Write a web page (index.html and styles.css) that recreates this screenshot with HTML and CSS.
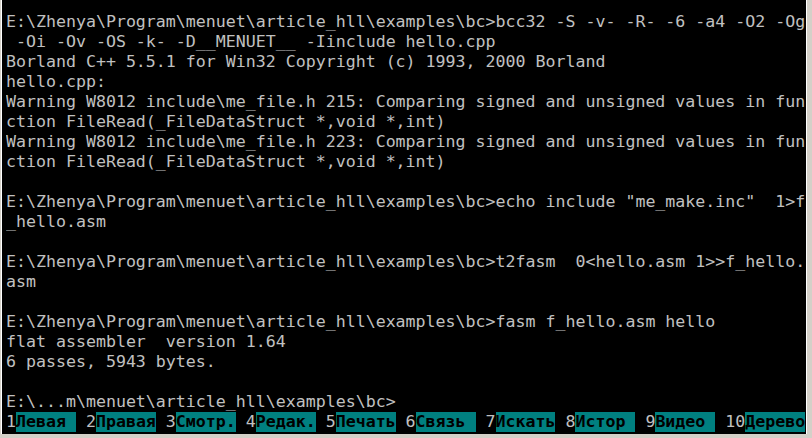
FILE: index.html
```html
<!DOCTYPE html>
<html lang="ru">
<head>
<meta charset="utf-8">
<title>Far Manager — консоль</title>
<link rel="stylesheet" href="styles.css">
</head>
<body>
<div class="window">
  <div class="console">
    <div class="screen">
      <div class="line">E:\Zhenya\Program\menuet\article_hll\examples\bc&gt;bcc32 -S -v- -R- -6 -a4 -O2 -Og</div>
      <div class="line"> -Oi -Ov -OS -k- -D__MENUET__ -Iinclude hello.cpp</div>
      <div class="line">Borland C++ 5.5.1 for Win32 Copyright (c) 1993, 2000 Borland</div>
      <div class="line">hello.cpp:</div>
      <div class="line">Warning W8012 include\me_file.h 215: Comparing signed and unsigned values in fun</div>
      <div class="line">ction FileRead(_FileDataStruct *,void *,int)</div>
      <div class="line">Warning W8012 include\me_file.h 223: Comparing signed and unsigned values in fun</div>
      <div class="line">ction FileRead(_FileDataStruct *,void *,int)</div>
      <div class="line"> </div>
      <div class="line">E:\Zhenya\Program\menuet\article_hll\examples\bc&gt;echo include "me_make.inc"  1&gt;f</div>
      <div class="line">_hello.asm</div>
      <div class="line"> </div>
      <div class="line">E:\Zhenya\Program\menuet\article_hll\examples\bc&gt;t2fasm  0&lt;hello.asm 1&gt;&gt;f_hello.</div>
      <div class="line">asm</div>
      <div class="line"> </div>
      <div class="line">E:\Zhenya\Program\menuet\article_hll\examples\bc&gt;fasm f_hello.asm hello</div>
      <div class="line">flat assembler  version 1.64</div>
      <div class="line">6 passes, 5943 bytes.</div>
      <div class="line"> </div>
      <div class="line">E:\...m\menuet\article_hll\examples\bc&gt;</div>
    </div>
    <div class="keybar">
      <div class="key"><span class="num">1</span><span class="label">Левая</span></div>
      <div class="key"><span class="num">2</span><span class="label">Правая</span></div>
      <div class="key"><span class="num">3</span><span class="label">Смотр.</span></div>
      <div class="key"><span class="num">4</span><span class="label">Редак.</span></div>
      <div class="key"><span class="num">5</span><span class="label">Печать</span></div>
      <div class="key"><span class="num">6</span><span class="label">Связь</span></div>
      <div class="key"><span class="num">7</span><span class="label">Искать</span></div>
      <div class="key"><span class="num">8</span><span class="label">Истор</span></div>
      <div class="key"><span class="num">9</span><span class="label">Видео</span></div>
      <div class="key"><span class="num">10</span><span class="label">Дерево</span></div>
    </div>
  </div>
</div>
</body>
</html>
```

FILE: styles.css
```css
html, body {
  margin: 0;
  padding: 0;
  background: #d4d0c8;
}

.window {
  width: 812px;
  height: 438px;
  box-sizing: border-box;
  display: flex;
  background: #d4d0c8;
  border-left: 1px solid #d4d0c8;
  border-bottom: 4px solid #d4d0c8;
  padding-left: 1px;
  box-shadow: inset 1px 0 0 #ffffff;
  overflow: hidden;
}

.console {
  width: 804px;
  height: 434px;
  box-sizing: border-box;
  background: #000000;
  padding: 12px 0 0 4px;
  color: #c0c0c0;
  font-family: "DejaVu Sans Mono", monospace;
  font-size: 16.6px;
  line-height: 20px;
  box-shadow: 1px 0 0 #ffffff;
}

.screen {
  display: flex;
  flex-direction: column;
}

.line {
  height: 20px;
  white-space: pre;
  overflow: hidden;
}

.keybar {
  display: flex;
  gap: 1ch;
  height: 20px;
  white-space: pre;
}

.key {
  display: flex;
}

.num {
  color: #c0c0c0;
}

.label {
  width: 6ch;
  background: #008080;
  color: #000000;
  font-weight: bold;
}
```
